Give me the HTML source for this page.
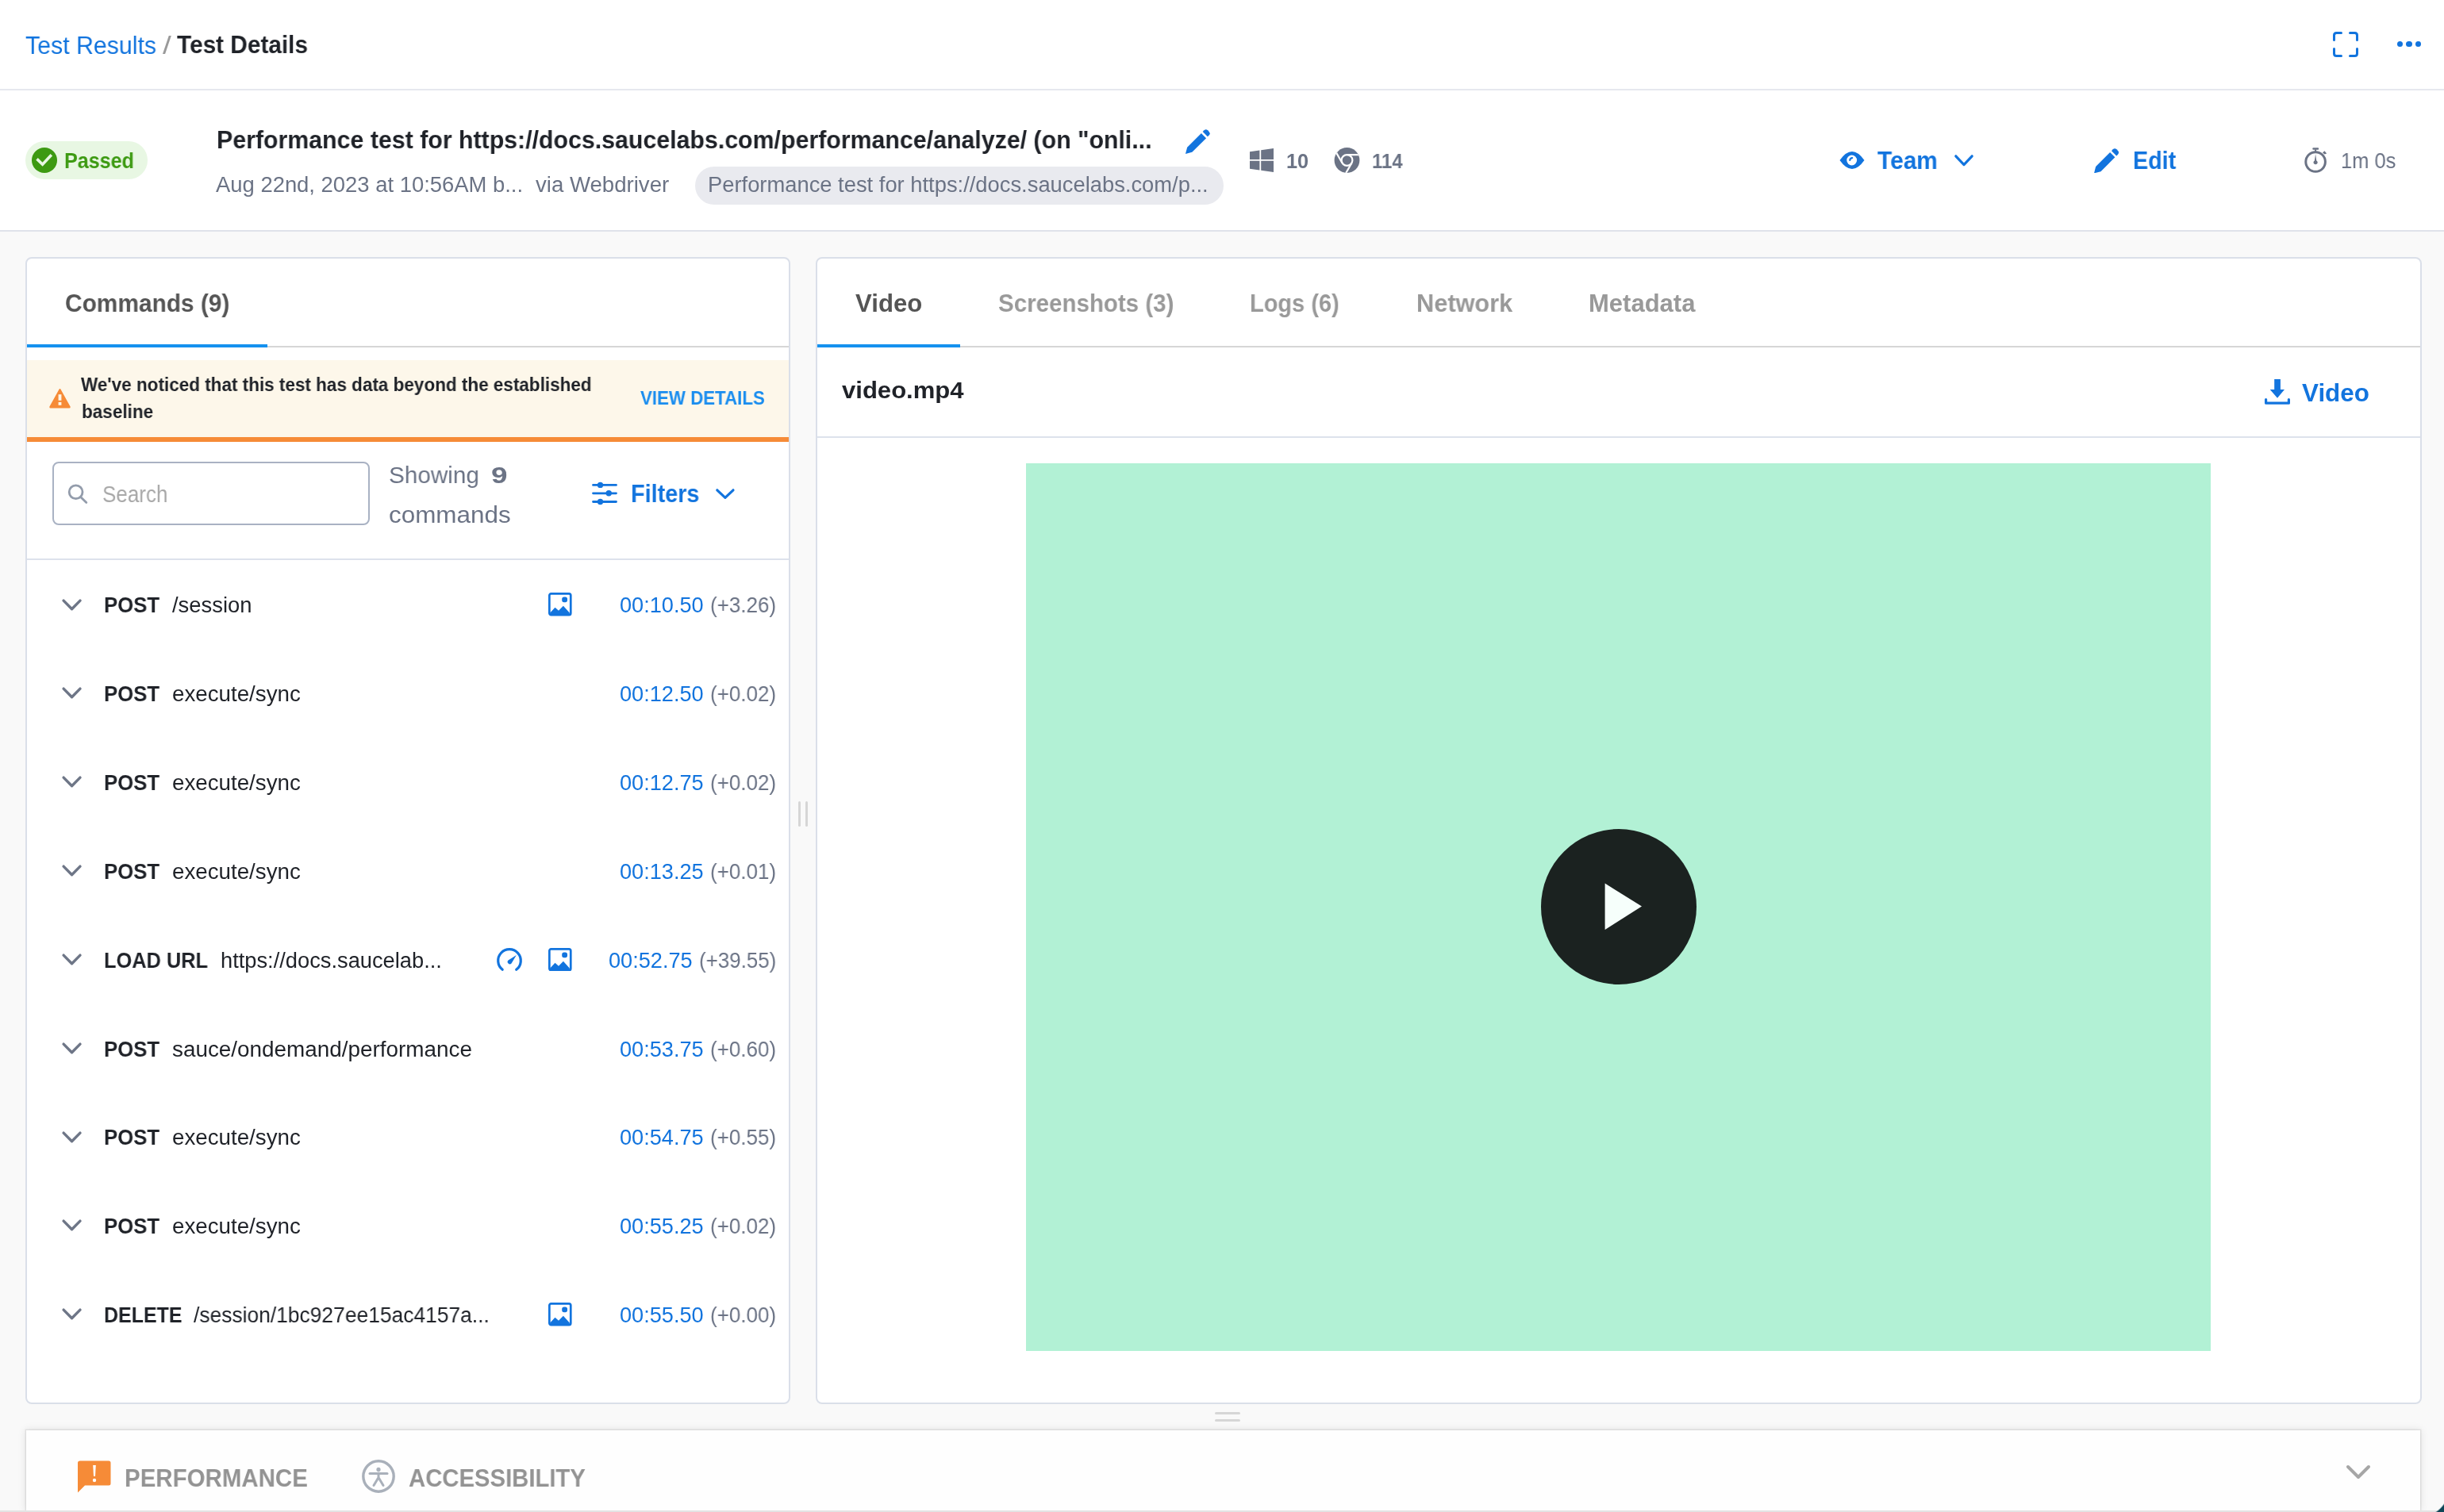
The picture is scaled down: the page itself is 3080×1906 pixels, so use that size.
<!DOCTYPE html>
<html><head><meta charset="utf-8"><title>Test Details</title>
<style>
html,body{margin:0;padding:0;width:3080px;height:1906px;overflow:hidden;background:#f9f9f9;}
body{position:relative;font-family:"Liberation Sans",sans-serif;}
.a{position:absolute;display:block;}
.t{position:absolute;white-space:nowrap;line-height:1;transform-origin:0 0;will-change:transform;font-family:"Liberation Sans",sans-serif;}
</style></head><body>
<div class="a" style="left:0;top:0;width:3080px;height:291px;background:#fff"></div>
<div class="a" style="left:0;top:112px;width:3080px;height:2px;background:#e6e8ee"></div>
<div class="a" style="left:0;top:290px;width:3080px;height:2px;background:#dfe2ea"></div>
<svg class="a" style="left:2940px;top:40px" width="32" height="32" viewBox="0 0 32 32"><path d="M1.5 10.5 V4.5 Q1.5 1.5 4.5 1.5 H10.5 M21.5 1.5 H27.5 Q30.5 1.5 30.5 4.5 V10.5 M30.5 21.5 V27.5 Q30.5 30.5 27.5 30.5 H21.5 M10.5 30.5 H4.5 Q1.5 30.5 1.5 27.5 V21.5" fill="none" stroke="#1274de" stroke-width="3" stroke-linecap="round"/></svg>
<div class="a" style="left:3021.2000000000003px;top:52.2px;width:7.2px;height:7.2px;border-radius:50%;background:#1274de"></div>
<div class="a" style="left:3032.4px;top:52.2px;width:7.2px;height:7.2px;border-radius:50%;background:#1274de"></div>
<div class="a" style="left:3043.7000000000003px;top:52.2px;width:7.2px;height:7.2px;border-radius:50%;background:#1274de"></div>
<div class="a" style="left:32px;top:178px;width:154px;height:48px;border-radius:24px;background:#e8f7e3"></div>
<svg class="a" style="left:40px;top:186px" width="32" height="32" viewBox="0 0 32 32"><circle cx="16" cy="16" r="16" fill="#3d9a12"/><path d="M7.8 15.6 L13.6 21.2 L23.6 10.6" fill="none" stroke="#e8f7e3" stroke-width="3.6" stroke-linecap="square"/></svg>
<svg class="a" style="left:1494px;top:163px" width="31" height="31" viewBox="0 0 32 32"><path d="M0 32 L2.2 23.4 L20.5 5.1 L26.9 11.5 L8.6 29.8 Z" fill="#1274de"/><path d="M22.4 3.2 L24.2 1.4 Q26.6 -0.8 29 1.4 L30.6 3 Q32.8 5.4 30.6 7.8 L28.8 9.6 Z" fill="#1274de"/></svg>
<div class="a" style="left:876px;top:210px;width:666px;height:48px;border-radius:24px;background:#e9eaef"></div>
<svg class="a" style="left:1575px;top:187px" width="30" height="30" viewBox="0 0 30 30"><path d="M0 4.2 L12.4 2.5 V14 H0 Z M14.2 2.2 L30 0 V14 H14.2 Z M0 15.8 H12.4 V27.5 L0 25.8 Z M14.2 15.8 H30 V30 L14.2 27.8 Z" fill="#6b7385"/></svg>
<svg class="a" style="left:1681px;top:186px" width="33" height="32" viewBox="-16.5 -16 33 32"><defs><clipPath id="chc"><circle r="15.9"/></clipPath></defs><circle r="15.9" fill="#6b7385"/><g clip-path="url(#chc)" stroke="#fff" stroke-width="2.2" fill="none"><circle r="6.9"/><path d="M0 -6.9 H20"/><path d="M-5.98 3.45 L-15.98 -13.87"/><path d="M5.98 3.45 L-4 20.77"/></g><circle r="5" fill="#6b7385"/></svg>
<svg class="a" style="left:2318px;top:190px" width="32" height="24" viewBox="0 0 32 24"><path d="M0.5 12 Q16 -10 31.5 12 Q16 34 0.5 12 Z" fill="#1274de"/><circle cx="15.7" cy="12" r="6.4" fill="#fff"/><path d="M13.3 12 A2.9 2.9 0 0 1 16.2 9.1" fill="none" stroke="#1274de" stroke-width="2.2" stroke-linecap="round"/></svg>
<svg class="a" style="left:2459.8px;top:191.8px" width="29.999999999999908" height="20.4"><polyline points="4.800000000000001,4.800000000000001 14.999999999999954,15.6 25.199999999999907,4.800000000000001" fill="none" stroke="#1274de" stroke-width="3.2" stroke-linecap="round" stroke-linejoin="round"/></svg>
<svg class="a" style="left:2638.6px;top:187px" width="31.4" height="31.4" viewBox="0 0 32 32"><path d="M0 32 L2.2 23.4 L20.5 5.1 L26.9 11.5 L8.6 29.8 Z" fill="#1274de"/><path d="M22.4 3.2 L24.2 1.4 Q26.6 -0.8 29 1.4 L30.6 3 Q32.8 5.4 30.6 7.8 L28.8 9.6 Z" fill="#1274de"/></svg>
<svg class="a" style="left:2904px;top:186px" width="29" height="33" viewBox="0 0 29 33"><circle cx="14.1" cy="18" r="12.3" fill="none" stroke="#6b7385" stroke-width="3"/><rect x="10.3" y="0.2" width="7.8" height="2.6" rx="1" fill="#6b7385"/><rect x="13.1" y="2.4" width="2" height="3" fill="#6b7385"/><path d="M23 6.6 L25.4 4.2 L28.2 7.6 L25.6 8.6 Z" fill="#6b7385"/><path d="M14.1 8.2 L15.3 16.4 A2.6 2.6 0 1 1 12.9 16.4 Z" fill="#6b7385"/></svg>
<div class="a" style="left:32px;top:324px;width:960px;height:1442px;border:2px solid #dadfe9;border-radius:8px;background:#fff"></div>
<div class="a" style="left:1028px;top:324px;width:2020px;height:1442px;border:2px solid #dadfe9;border-radius:8px;background:#fff"></div>
<div class="a" style="left:34px;top:436px;width:960px;height:2px;background:#d6d6d6"></div>
<div class="a" style="left:34px;top:434px;width:303px;height:4px;background:#1591ef"></div>
<div class="a" style="left:34px;top:454px;width:960px;height:97px;background:#fdf7ea"></div>
<div class="a" style="left:34px;top:551px;width:960px;height:6px;background:#f68b37"></div>
<svg class="a" style="left:62px;top:489px" width="27" height="26" viewBox="0 0 27 26"><path d="M13.5 1 Q14.1 1 14.5 1.8 L26.6 23.6 Q27 25.5 25.4 25.5 H1.6 Q0 25.5 0.4 23.6 L12.5 1.8 Q12.9 1 13.5 1 Z" fill="#f68b37"/><rect x="11.6" y="8.2" width="3.8" height="7.6" fill="#fdf7ea"/><rect x="11.6" y="17.9" width="3.8" height="3.9" fill="#fdf7ea"/></svg>
<div class="a" style="left:66px;top:582px;width:396px;height:76px;border:2px solid #a9b2c3;border-radius:8px;background:#fff"></div>
<svg class="a" style="left:85px;top:610px" width="26" height="26" viewBox="0 0 26 26"><circle cx="10.6" cy="10.2" r="8.4" fill="none" stroke="#939cab" stroke-width="2.8"/><path d="M16.6 16.4 L23.8 23.6" stroke="#939cab" stroke-width="2.8" stroke-linecap="round"/></svg>
<svg class="a" style="left:746px;top:606px" width="32" height="32" viewBox="0 0 32 32"><path d="M1.5 5.4 H30.5 M1.5 15.8 H30.5 M1.5 26.5 H30.5" stroke="#1274de" stroke-width="2.8" stroke-linecap="round"/><circle cx="10.5" cy="5.4" r="3.7" fill="#1274de"/><circle cx="21.2" cy="15.8" r="3.7" fill="#1274de"/><circle cx="10.5" cy="26.5" r="3.7" fill="#1274de"/></svg>
<svg class="a" style="left:899.0999999999999px;top:612.5px" width="29.80000000000009" height="19.199999999999953"><polyline points="4.800000000000001,4.800000000000001 14.900000000000045,14.399999999999954 25.00000000000009,4.800000000000001" fill="none" stroke="#1274de" stroke-width="3.2" stroke-linecap="round" stroke-linejoin="round"/></svg>
<div class="a" style="left:34px;top:704px;width:960px;height:2px;background:#dde2ec"></div>
<svg class="a" style="left:74.6px;top:751.5px" width="31.099999999999998" height="20.8"><polyline points="5.1,5.1 15.549999999999999,15.7 25.999999999999996,5.1" fill="none" stroke="#6e7687" stroke-width="3.4" stroke-linecap="round" stroke-linejoin="round"/></svg>
<svg class="a" style="left:691.4px;top:747.4px" width="29.6" height="29.6" viewBox="0 0 29.6 29.6"><rect x="1.35" y="1.35" width="26.9" height="26.9" rx="2.2" fill="none" stroke="#1274de" stroke-width="2.7"/><rect x="17.2" y="5.4" width="6.8" height="6.8" rx="2.6" fill="#1274de"/><path d="M2.2 25.4 L8.5 18.8 L13 22.8 L18.9 16.7 L26.8 25.4 L26.8 28 L2.2 28 Z" fill="#1274de"/></svg>
<svg class="a" style="left:74.6px;top:863.34px" width="31.099999999999998" height="20.8"><polyline points="5.1,5.1 15.549999999999999,15.7 25.999999999999996,5.1" fill="none" stroke="#6e7687" stroke-width="3.4" stroke-linecap="round" stroke-linejoin="round"/></svg>
<svg class="a" style="left:74.6px;top:975.1800000000001px" width="31.099999999999998" height="20.8"><polyline points="5.1,5.1 15.549999999999999,15.7 25.999999999999996,5.1" fill="none" stroke="#6e7687" stroke-width="3.4" stroke-linecap="round" stroke-linejoin="round"/></svg>
<svg class="a" style="left:74.6px;top:1087.0199999999998px" width="31.099999999999998" height="20.8"><polyline points="5.1,5.1 15.549999999999999,15.7 25.999999999999996,5.1" fill="none" stroke="#6e7687" stroke-width="3.4" stroke-linecap="round" stroke-linejoin="round"/></svg>
<svg class="a" style="left:74.6px;top:1198.8599999999997px" width="31.099999999999998" height="20.8"><polyline points="5.1,5.1 15.549999999999999,15.7 25.999999999999996,5.1" fill="none" stroke="#6e7687" stroke-width="3.4" stroke-linecap="round" stroke-linejoin="round"/></svg>
<svg class="a" style="left:691.4px;top:1194.7599999999998px" width="29.6" height="29.6" viewBox="0 0 29.6 29.6"><rect x="1.35" y="1.35" width="26.9" height="26.9" rx="2.2" fill="none" stroke="#1274de" stroke-width="2.7"/><rect x="17.2" y="5.4" width="6.8" height="6.8" rx="2.6" fill="#1274de"/><path d="M2.2 25.4 L8.5 18.8 L13 22.8 L18.9 16.7 L26.8 25.4 L26.8 28 L2.2 28 Z" fill="#1274de"/></svg>
<svg class="a" style="left:624px;top:1192.9999999999998px" width="36" height="34" viewBox="0 0 36 34"><path d="M9.2 29.27 A14.3 14.3 0 1 1 26.7 29.35" fill="none" stroke="#1274de" stroke-width="3.2" stroke-linecap="round"/><path d="M16.5 17.54 L26.8 11 L20.5 21.46 A2.8 2.8 0 0 1 16.5 17.54 Z" fill="#1274de"/></svg>
<svg class="a" style="left:74.6px;top:1310.6999999999998px" width="31.099999999999998" height="20.8"><polyline points="5.1,5.1 15.549999999999999,15.7 25.999999999999996,5.1" fill="none" stroke="#6e7687" stroke-width="3.4" stroke-linecap="round" stroke-linejoin="round"/></svg>
<svg class="a" style="left:74.6px;top:1422.5399999999997px" width="31.099999999999998" height="20.8"><polyline points="5.1,5.1 15.549999999999999,15.7 25.999999999999996,5.1" fill="none" stroke="#6e7687" stroke-width="3.4" stroke-linecap="round" stroke-linejoin="round"/></svg>
<svg class="a" style="left:74.6px;top:1534.3799999999997px" width="31.099999999999998" height="20.8"><polyline points="5.1,5.1 15.549999999999999,15.7 25.999999999999996,5.1" fill="none" stroke="#6e7687" stroke-width="3.4" stroke-linecap="round" stroke-linejoin="round"/></svg>
<svg class="a" style="left:74.6px;top:1646.2199999999998px" width="31.099999999999998" height="20.8"><polyline points="5.1,5.1 15.549999999999999,15.7 25.999999999999996,5.1" fill="none" stroke="#6e7687" stroke-width="3.4" stroke-linecap="round" stroke-linejoin="round"/></svg>
<svg class="a" style="left:691.4px;top:1642.12px" width="29.6" height="29.6" viewBox="0 0 29.6 29.6"><rect x="1.35" y="1.35" width="26.9" height="26.9" rx="2.2" fill="none" stroke="#1274de" stroke-width="2.7"/><rect x="17.2" y="5.4" width="6.8" height="6.8" rx="2.6" fill="#1274de"/><path d="M2.2 25.4 L8.5 18.8 L13 22.8 L18.9 16.7 L26.8 25.4 L26.8 28 L2.2 28 Z" fill="#1274de"/></svg>
<div class="a" style="left:1006px;top:1010px;width:3.2px;height:32px;border-radius:2px;background:#d6d6d6"></div>
<div class="a" style="left:1014.8px;top:1010px;width:3.2px;height:32px;border-radius:2px;background:#d6d6d6"></div>
<div class="a" style="left:1531px;top:1780px;width:32px;height:3px;border-radius:2px;background:#d6d6d6"></div>
<div class="a" style="left:1531px;top:1788.8px;width:32px;height:3px;border-radius:2px;background:#d6d6d6"></div>
<div class="a" style="left:1030px;top:436px;width:2020px;height:2px;background:#d6d6d6"></div>
<div class="a" style="left:1030px;top:434px;width:180px;height:4px;background:#1591ef"></div>
<div class="a" style="left:1030px;top:550px;width:2020px;height:2px;background:#dde2ec"></div>
<svg class="a" style="left:2854px;top:477px" width="32" height="34" viewBox="0 0 32 34"><path d="M12.2 1 H19.9 V14.1 H25 L16 24.8 L6.7 14.1 H12.2 Z" fill="#1274de"/><path d="M1.6 26.6 V31.2 H30.4 V26.6" fill="none" stroke="#1274de" stroke-width="3.2" stroke-linejoin="round" stroke-linecap="round"/></svg>
<div class="a" style="left:1293px;top:584px;width:1493px;height:1119px;background:#b2f1d5"></div>
<div class="a" style="left:1942px;top:1045px;width:196px;height:196px;border-radius:50%;background:#1b2220"></div>
<svg class="a" style="left:2022px;top:1113px" width="48" height="60" viewBox="0 0 48 60"><path d="M0.6 0.6 L47 29.6 L0.6 59 Z" fill="#f6fffb"/></svg>
<div class="a" style="left:33px;top:1803px;width:3017px;height:101px;background:#fefefe;box-shadow:0 0 0 1.5px rgba(0,0,0,0.07),0 0 10px 1px rgba(0,0,0,0.09)"></div>
<div class="a" style="left:0;top:1904px;width:3080px;height:2px;background:#e3e3e3"></div>
<svg class="a" style="left:98px;top:1841px" width="42" height="41" viewBox="0 0 42 41"><path d="M3 0.5 H39 Q41.5 0.5 41.5 3 V29 Q41.5 31.5 39 31.5 H9 L0 40.5 V3 Q0 0.5 3 0.5 Z" fill="#f68b37"/><path d="M19.2 6 H22.8 L22 20 H20 Z" fill="#fff"/><circle cx="21" cy="25" r="2.2" fill="#fff"/></svg>
<svg class="a" style="left:456px;top:1840px" width="42" height="42" viewBox="0 0 42 42"><circle cx="21" cy="21" r="19.2" fill="none" stroke="#a9b0ba" stroke-width="3.4"/><circle cx="21" cy="12.4" r="2.6" fill="#a9b0ba"/><path d="M10 17.6 H32" stroke="#a9b0ba" stroke-width="3" stroke-linecap="round"/><path d="M21 17 V22.5 L15 32.5 M21 22.5 L27 32.5" fill="none" stroke="#a9b0ba" stroke-width="3" stroke-linecap="round" stroke-linejoin="round"/></svg>
<svg class="a" style="left:2953px;top:1842.5px" width="38" height="25.0"><polyline points="6.0,6.0 19.0,19.0 32.0,6.0" fill="none" stroke="#a6a6a6" stroke-width="4" stroke-linecap="round" stroke-linejoin="round"/></svg>
<div class="a" style="left:3040px;top:1866px;width:40px;height:40px;background:radial-gradient(circle 36px at 10px 10px, rgba(13,69,86,0) 35.2px, #0d4556 36.8px)"></div>
<div class="t" id="bc1" style="left:32.00px;top:41.90px;font-size:31px;font-weight:400;color:#1274de;transform:scaleX(0.9779);">Test Results</div>
<div class="t" id="bc2" style="left:204.80px;top:41.50px;font-size:31px;font-weight:400;color:#9a9a9a;transform:scaleX(1.2532);">/</div>
<div class="t" id="bc3" style="left:223.00px;top:41.20px;font-size:31px;font-weight:700;color:#1f2228;transform:scaleX(0.9609);">Test Details</div>
<div class="t" id="passed" style="left:80.80px;top:190.10px;font-size:27px;font-weight:700;color:#3d9a12;transform:scaleX(0.9296);">Passed</div>
<div class="t" id="title" style="left:272.60px;top:161.40px;font-size:31px;font-weight:700;color:#1f2228;transform:scaleX(0.9780);">Performance test for https://docs.saucelabs.com/performance/analyze/ (on &quot;onli...</div>
<div class="t" id="sub1" style="left:271.60px;top:220.20px;font-size:27px;font-weight:400;color:#6b7385;transform:scaleX(1.0152);">Aug 22nd, 2023 at 10:56AM b...</div>
<div class="t" id="sub2" style="left:675.10px;top:220.30px;font-size:27px;font-weight:400;color:#6b7385;transform:scaleX(1.0221);">via Webdriver</div>
<div class="t" id="pilltxt" style="left:892.00px;top:219.70px;font-size:27px;font-weight:400;color:#6b7385;transform:scaleX(1.0127);">Performance test for https://docs.saucelabs.com/p...</div>
<div class="t" id="os" style="left:1621.30px;top:190.60px;font-size:25px;font-weight:700;color:#6b7385;transform:scaleX(1.0144);">10</div>
<div class="t" id="br" style="left:1728.90px;top:190.60px;font-size:25px;font-weight:700;color:#6b7385;transform:scaleX(0.9572);">114</div>
<div class="t" id="team" style="left:2365.80px;top:187.00px;font-size:31px;font-weight:700;color:#1274de;transform:scaleX(0.9647);">Team</div>
<div class="t" id="edit" style="left:2688.00px;top:187.00px;font-size:31px;font-weight:700;color:#1274de;transform:scaleX(0.9256);">Edit</div>
<div class="t" id="dur" style="left:2950.30px;top:190.00px;font-size:27px;font-weight:400;color:#6b7385;transform:scaleX(0.9439);">1m 0s</div>
<div class="t" id="cmdtab" style="left:82.10px;top:367.00px;font-size:31px;font-weight:700;color:#555555;transform:scaleX(0.9629);">Commands (9)</div>
<div class="t" id="warn1" style="left:102.30px;top:474.40px;font-size:23px;font-weight:700;color:#1f2228;transform:scaleX(0.9779);">We&#x27;ve noticed that this test has data beyond the established</div>
<div class="t" id="warn2" style="left:102.60px;top:508.10px;font-size:23px;font-weight:700;color:#1f2228;transform:scaleX(0.9789);">baseline</div>
<div class="t" id="viewd" style="left:807.20px;top:491.00px;font-size:23px;font-weight:700;color:#1a8def;transform:scaleX(0.9688);">VIEW DETAILS</div>
<div class="t" id="search" style="left:128.50px;top:608.60px;font-size:29px;font-weight:400;color:#a8a8a8;transform:scaleX(0.8969);">Search</div>
<div class="t" id="show1" style="left:489.90px;top:584.00px;font-size:30px;font-weight:400;color:#6b7385;transform:scaleX(0.9889);">Showing</div>
<div class="t" id="show9" style="left:618.70px;top:584.00px;font-size:30px;font-weight:700;color:#6b7385;transform:scaleX(1.2290);">9</div>
<div class="t" id="show2" style="left:489.90px;top:634.40px;font-size:30px;font-weight:400;color:#6b7385;transform:scaleX(1.0468);">commands</div>
<div class="t" id="filters" style="left:795.30px;top:607.20px;font-size:31px;font-weight:700;color:#1274de;transform:scaleX(0.9287);">Filters</div>
<div class="t" id="m0" style="left:130.50px;top:750.30px;font-size:27px;font-weight:700;color:#1f2228;transform:scaleX(0.9535);">POST</div>
<div class="t" id="p0" style="left:216.60px;top:750.30px;font-size:27px;font-weight:400;color:#1f2228;transform:scaleX(1.0138);">/session</div>
<div class="t" id="d0" style="left:894.90px;top:750.30px;font-size:27px;font-weight:400;color:#6b7385;transform:scaleX(0.9630);">(+3.26)</div>
<div class="t" id="tm0" style="left:780.90px;top:750.30px;font-size:27px;font-weight:400;color:#1274de;transform:scaleX(1.0047);">00:10.50</div>
<div class="t" id="m1" style="left:130.50px;top:862.14px;font-size:27px;font-weight:700;color:#1f2228;transform:scaleX(0.9535);">POST</div>
<div class="t" id="p1" style="left:216.60px;top:862.14px;font-size:27px;font-weight:400;color:#1f2228;transform:scaleX(1.0268);">execute/sync</div>
<div class="t" id="d1" style="left:894.90px;top:862.14px;font-size:27px;font-weight:400;color:#6b7385;transform:scaleX(0.9630);">(+0.02)</div>
<div class="t" id="tm1" style="left:780.90px;top:862.14px;font-size:27px;font-weight:400;color:#1274de;transform:scaleX(1.0047);">00:12.50</div>
<div class="t" id="m2" style="left:130.50px;top:973.98px;font-size:27px;font-weight:700;color:#1f2228;transform:scaleX(0.9535);">POST</div>
<div class="t" id="p2" style="left:216.60px;top:973.98px;font-size:27px;font-weight:400;color:#1f2228;transform:scaleX(1.0268);">execute/sync</div>
<div class="t" id="d2" style="left:894.90px;top:973.98px;font-size:27px;font-weight:400;color:#6b7385;transform:scaleX(0.9630);">(+0.02)</div>
<div class="t" id="tm2" style="left:780.90px;top:973.98px;font-size:27px;font-weight:400;color:#1274de;transform:scaleX(1.0047);">00:12.75</div>
<div class="t" id="m3" style="left:130.50px;top:1085.82px;font-size:27px;font-weight:700;color:#1f2228;transform:scaleX(0.9535);">POST</div>
<div class="t" id="p3" style="left:216.60px;top:1085.82px;font-size:27px;font-weight:400;color:#1f2228;transform:scaleX(1.0268);">execute/sync</div>
<div class="t" id="d3" style="left:894.90px;top:1085.82px;font-size:27px;font-weight:400;color:#6b7385;transform:scaleX(0.9630);">(+0.01)</div>
<div class="t" id="tm3" style="left:780.90px;top:1085.82px;font-size:27px;font-weight:400;color:#1274de;transform:scaleX(1.0047);">00:13.25</div>
<div class="t" id="m4" style="left:130.50px;top:1197.66px;font-size:27px;font-weight:700;color:#1f2228;transform:scaleX(0.9392);">LOAD URL</div>
<div class="t" id="p4" style="left:277.80px;top:1197.66px;font-size:27px;font-weight:400;color:#1f2228;transform:scaleX(1.0099);">https://docs.saucelab...</div>
<div class="t" id="d4" style="left:880.69px;top:1197.66px;font-size:27px;font-weight:400;color:#6b7385;transform:scaleX(0.9606);">(+39.55)</div>
<div class="t" id="tm4" style="left:766.69px;top:1197.66px;font-size:27px;font-weight:400;color:#1274de;transform:scaleX(1.0047);">00:52.75</div>
<div class="t" id="m5" style="left:130.50px;top:1309.50px;font-size:27px;font-weight:700;color:#1f2228;transform:scaleX(0.9535);">POST</div>
<div class="t" id="p5" style="left:216.60px;top:1309.50px;font-size:27px;font-weight:400;color:#1f2228;transform:scaleX(1.0321);">sauce/ondemand/performance</div>
<div class="t" id="d5" style="left:894.90px;top:1309.50px;font-size:27px;font-weight:400;color:#6b7385;transform:scaleX(0.9630);">(+0.60)</div>
<div class="t" id="tm5" style="left:780.90px;top:1309.50px;font-size:27px;font-weight:400;color:#1274de;transform:scaleX(1.0047);">00:53.75</div>
<div class="t" id="m6" style="left:130.50px;top:1421.34px;font-size:27px;font-weight:700;color:#1f2228;transform:scaleX(0.9535);">POST</div>
<div class="t" id="p6" style="left:216.60px;top:1421.34px;font-size:27px;font-weight:400;color:#1f2228;transform:scaleX(1.0268);">execute/sync</div>
<div class="t" id="d6" style="left:894.90px;top:1421.34px;font-size:27px;font-weight:400;color:#6b7385;transform:scaleX(0.9630);">(+0.55)</div>
<div class="t" id="tm6" style="left:780.90px;top:1421.34px;font-size:27px;font-weight:400;color:#1274de;transform:scaleX(1.0047);">00:54.75</div>
<div class="t" id="m7" style="left:130.50px;top:1533.18px;font-size:27px;font-weight:700;color:#1f2228;transform:scaleX(0.9535);">POST</div>
<div class="t" id="p7" style="left:216.60px;top:1533.18px;font-size:27px;font-weight:400;color:#1f2228;transform:scaleX(1.0268);">execute/sync</div>
<div class="t" id="d7" style="left:894.90px;top:1533.18px;font-size:27px;font-weight:400;color:#6b7385;transform:scaleX(0.9630);">(+0.02)</div>
<div class="t" id="tm7" style="left:780.90px;top:1533.18px;font-size:27px;font-weight:400;color:#1274de;transform:scaleX(1.0047);">00:55.25</div>
<div class="t" id="m8" style="left:130.50px;top:1645.02px;font-size:27px;font-weight:700;color:#1f2228;transform:scaleX(0.9248);">DELETE</div>
<div class="t" id="p8" style="left:244.30px;top:1645.02px;font-size:27px;font-weight:400;color:#1f2228;transform:scaleX(0.9777);">/session/1bc927ee15ac4157a...</div>
<div class="t" id="d8" style="left:894.90px;top:1645.02px;font-size:27px;font-weight:400;color:#6b7385;transform:scaleX(0.9630);">(+0.00)</div>
<div class="t" id="tm8" style="left:780.90px;top:1645.02px;font-size:27px;font-weight:400;color:#1274de;transform:scaleX(1.0047);">00:55.50</div>
<div class="t" id="tabv" style="left:1077.60px;top:366.90px;font-size:31px;font-weight:700;color:#555555;transform:scaleX(1.0053);">Video</div>
<div class="t" id="tabs" style="left:1257.60px;top:366.90px;font-size:31px;font-weight:700;color:#999999;transform:scaleX(0.9519);">Screenshots (3)</div>
<div class="t" id="tabl" style="left:1575.20px;top:366.90px;font-size:31px;font-weight:700;color:#999999;transform:scaleX(0.9348);">Logs (6)</div>
<div class="t" id="tabn" style="left:1784.50px;top:366.90px;font-size:31px;font-weight:700;color:#999999;transform:scaleX(0.9914);">Network</div>
<div class="t" id="tabm" style="left:2001.60px;top:366.90px;font-size:31px;font-weight:700;color:#999999;transform:scaleX(1.0002);">Metadata</div>
<div class="t" id="vmp4" style="left:1061.00px;top:477.00px;font-size:30px;font-weight:700;color:#1f2228;transform:scaleX(1.0352);">video.mp4</div>
<div class="t" id="dlv" style="left:2901.00px;top:479.90px;font-size:31px;font-weight:700;color:#1274de;transform:scaleX(1.0137);">Video</div>
<div class="t" id="perf" style="left:157.30px;top:1847.90px;font-size:31px;font-weight:700;color:#939393;transform:scaleX(0.9504);">PERFORMANCE</div>
<div class="t" id="acc" style="left:515.30px;top:1847.70px;font-size:31px;font-weight:700;color:#939393;transform:scaleX(0.9446);">ACCESSIBILITY</div>
</body></html>
